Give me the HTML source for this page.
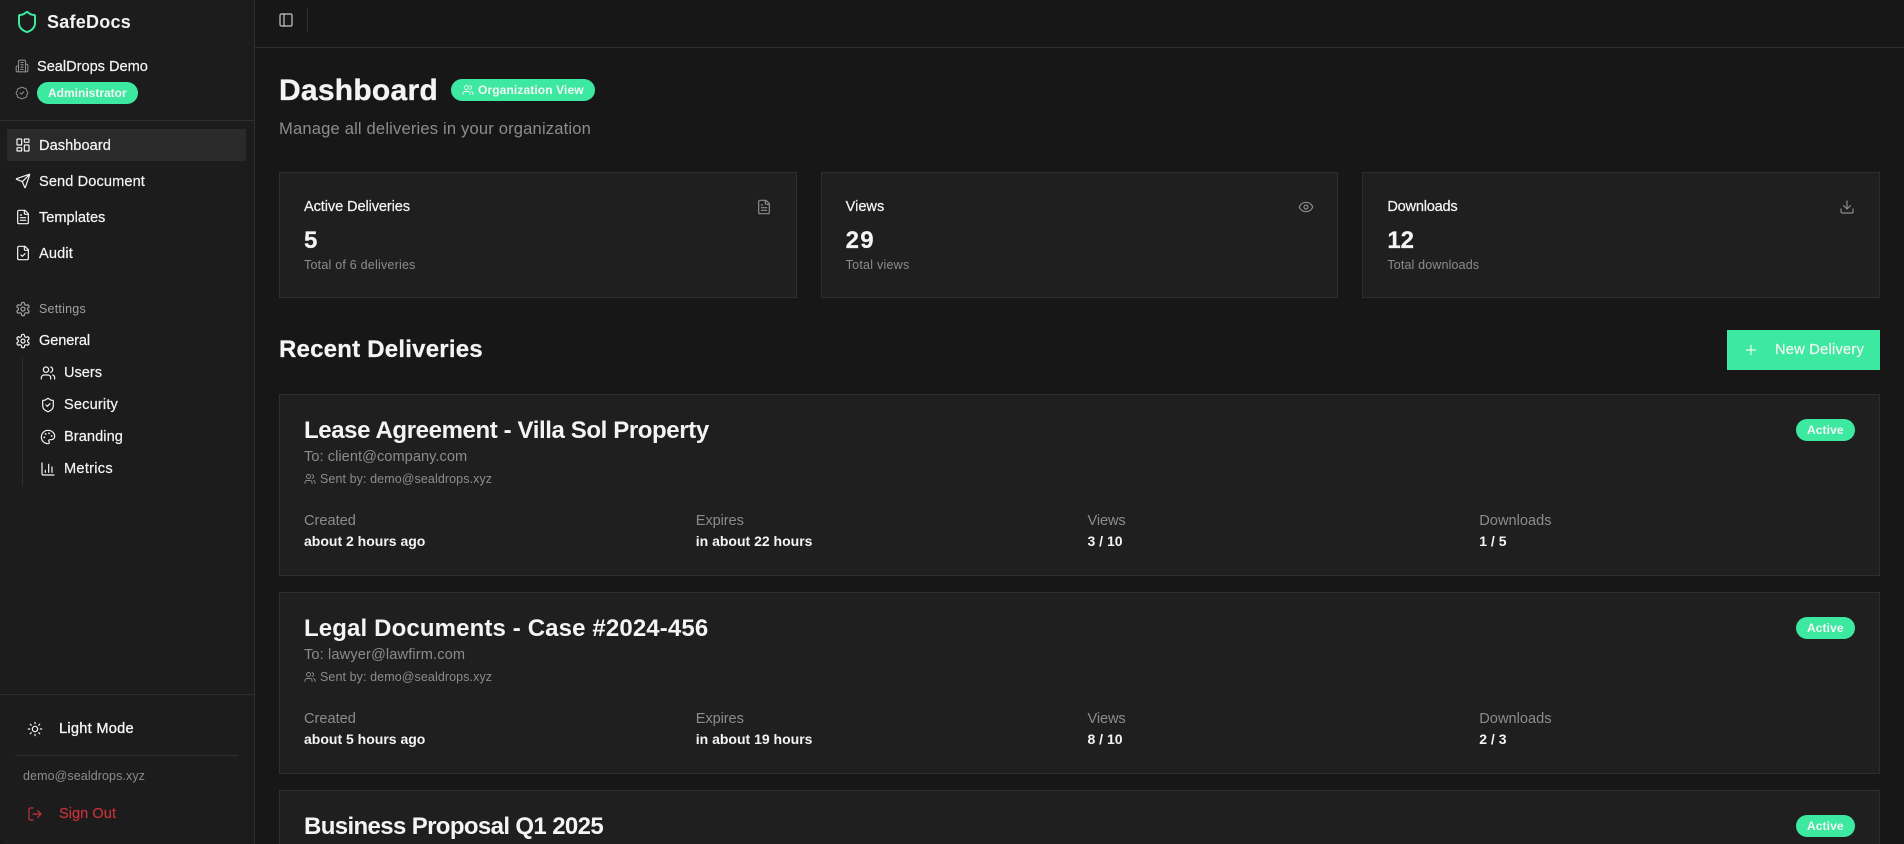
<!DOCTYPE html>
<html lang="en">
<head>
<meta charset="utf-8">
<title>SafeDocs Dashboard</title>
<style>
*{box-sizing:border-box;margin:0;padding:0}
html,body{width:1904px;height:844px;overflow:hidden;background:#171717;font-family:"Liberation Sans",sans-serif;color:#f4f4f4}
.t{position:absolute;white-space:nowrap;line-height:20px;font-size:14.6px}
.m{-webkit-text-stroke:.2px currentColor}
.b{font-weight:700;font-size:14px}
.x{font-size:12.5px}
.b.x{font-size:12px}
.mut{color:#8c8c8c}
svg.i{position:absolute;fill:none;stroke:currentColor;stroke-width:1.8;stroke-linecap:round;stroke-linejoin:round}
aside{position:absolute;left:0;top:0;width:255px;height:844px;background:#1c1c1c;border-right:1px solid #2e2e2e;border-bottom-left-radius:6px;overflow:hidden}
.ln{position:absolute;background:#2e2e2e}
main{position:absolute;left:255px;top:0;width:1649px;height:844px;overflow:hidden}
.abs{position:absolute;left:-255px;top:0;width:1904px;height:844px}
.card{position:absolute;background:#1f1f1f;box-shadow:inset 0 0 0 1px #2e2e2e}
.stat{top:172px;width:517.67px;height:126px}
.del{left:279px;width:1601px;height:182px}
.pill{position:absolute;background:#3de9a1;border-radius:11px;height:22px}
.title{position:absolute;left:25px;top:21px;font-size:24px;line-height:32px;font-weight:700;white-space:nowrap}
.num{position:absolute;left:25px;top:53px;font-size:24px;line-height:32px;font-weight:700;-webkit-text-stroke:.2px currentColor}
</style>
</head>
<body>
<svg width="0" height="0" style="position:absolute">
<defs>
<symbol id="shield" viewBox="0 0 24 24"><path d="M20 13c0 5-3.5 7.5-7.66 8.95a1 1 0 0 1-.67-.01C7.5 20.5 4 18 4 13V6a1 1 0 0 1 1-1c2 0 4.5-1.2 6.24-2.72a1.17 1.17 0 0 1 1.52 0C14.51 3.81 17 5 19 5a1 1 0 0 1 1 1z"/></symbol>
<symbol id="shieldc" viewBox="0 0 24 24"><path d="M20 13c0 5-3.5 7.5-7.66 8.95a1 1 0 0 1-.67-.01C7.5 20.5 4 18 4 13V6a1 1 0 0 1 1-1c2 0 4.5-1.2 6.24-2.72a1.17 1.17 0 0 1 1.52 0C14.51 3.81 17 5 19 5a1 1 0 0 1 1 1z"/><path d="m9 12 2 2 4-4"/></symbol>
<symbol id="bld" viewBox="0 0 24 24"><path d="M6 22V4a2 2 0 0 1 2-2h8a2 2 0 0 1 2 2v18Z"/><path d="M6 12H4a2 2 0 0 0-2 2v6a2 2 0 0 0 2 2h2"/><path d="M18 9h2a2 2 0 0 1 2 2v9a2 2 0 0 1-2 2h-2"/><path d="M10 6h4M10 10h4M10 14h4M10 18h4"/></symbol>
<symbol id="badge" viewBox="0 0 24 24"><path d="M3.85 8.62a4 4 0 0 1 4.78-4.77 4 4 0 0 1 6.74 0 4 4 0 0 1 4.78 4.78 4 4 0 0 1 0 6.74 4 4 0 0 1-4.77 4.78 4 4 0 0 1-6.75 0 4 4 0 0 1-4.78-4.77 4 4 0 0 1 0-6.76Z"/><path d="m9 12 2 2 4-4"/></symbol>
<symbol id="dash" viewBox="0 0 24 24"><rect x="3" y="3" width="7" height="9" rx="1"/><rect x="14" y="3" width="7" height="5" rx="1"/><rect x="14" y="12" width="7" height="9" rx="1"/><rect x="3" y="16" width="7" height="5" rx="1"/></symbol>
<symbol id="send" viewBox="0 0 24 24"><path d="M14.536 21.686a.5.5 0 0 0 .937-.024l6.5-19a.496.496 0 0 0-.635-.635l-19 6.5a.5.5 0 0 0-.024.937l7.93 3.18a2 2 0 0 1 1.112 1.11z"/><path d="m21.854 2.147-10.94 10.939"/></symbol>
<symbol id="file" viewBox="0 0 24 24"><path d="M15 2H6a2 2 0 0 0-2 2v16a2 2 0 0 0 2 2h12a2 2 0 0 0 2-2V7Z"/><path d="M14 2v4a2 2 0 0 0 2 2h4"/><path d="M10 9H8M16 13H8M16 17H8"/></symbol>
<symbol id="filec" viewBox="0 0 24 24"><path d="M15 2H6a2 2 0 0 0-2 2v16a2 2 0 0 0 2 2h12a2 2 0 0 0 2-2V7Z"/><path d="M14 2v4a2 2 0 0 0 2 2h4"/><path d="m9 15 2 2 4-4"/></symbol>
<symbol id="gear" viewBox="0 0 24 24"><path d="M12.22 2h-.44a2 2 0 0 0-2 2v.18a2 2 0 0 1-1 1.73l-.43.25a2 2 0 0 1-2 0l-.15-.08a2 2 0 0 0-2.73.73l-.22.38a2 2 0 0 0 .73 2.73l.15.1a2 2 0 0 1 1 1.72v.51a2 2 0 0 1-1 1.74l-.15.09a2 2 0 0 0-.73 2.73l.22.38a2 2 0 0 0 2.73.73l.15-.08a2 2 0 0 1 2 0l.43.25a2 2 0 0 1 1 1.73V20a2 2 0 0 0 2 2h.44a2 2 0 0 0 2-2v-.18a2 2 0 0 1 1-1.73l.43-.25a2 2 0 0 1 2 0l.15.08a2 2 0 0 0 2.73-.73l.22-.39a2 2 0 0 0-.73-2.73l-.15-.08a2 2 0 0 1-1-1.74v-.5a2 2 0 0 1 1-1.74l.15-.09a2 2 0 0 0 .73-2.73l-.22-.38a2 2 0 0 0-2.73-.73l-.15.08a2 2 0 0 1-2 0l-.43-.25a2 2 0 0 1-1-1.73V4a2 2 0 0 0-2-2z"/><circle cx="12" cy="12" r="3"/></symbol>
<symbol id="users" viewBox="0 0 24 24"><path d="M16 21v-2a4 4 0 0 0-4-4H6a4 4 0 0 0-4 4v2"/><circle cx="9" cy="7" r="4"/><path d="M22 21v-2a4 4 0 0 0-3-3.87"/><path d="M16 3.13a4 4 0 0 1 0 7.75"/></symbol>
<symbol id="pal" viewBox="0 0 24 24"><path d="M12 22a1 1 0 0 1 0-20 10 9 0 0 1 10 9 5 5 0 0 1-5 5h-2.25a1.75 1.75 0 0 0-1.4 2.8l.3.4a1.75 1.75 0 0 1-1.4 2.8z"/><circle cx="13.5" cy="6.5" r=".5" fill="currentColor"/><circle cx="17.5" cy="10.5" r=".5" fill="currentColor"/><circle cx="6.5" cy="12.5" r=".5" fill="currentColor"/><circle cx="8.5" cy="7.5" r=".5" fill="currentColor"/></symbol>
<symbol id="chart" viewBox="0 0 24 24"><path d="M3 3v16a2 2 0 0 0 2 2h16"/><path d="M18 17V9"/><path d="M13 17V5"/><path d="M8 17v-3"/></symbol>
<symbol id="sun" viewBox="0 0 24 24"><circle cx="12" cy="12" r="4"/><path d="M12 2v2M12 20v2M4.93 4.93l1.41 1.41M17.66 17.66l1.41 1.41M2 12h2M20 12h2M6.34 17.66l-1.41 1.41M19.07 4.93l-1.41 1.41"/></symbol>
<symbol id="out" viewBox="0 0 24 24"><path d="M9 21H5a2 2 0 0 1-2-2V5a2 2 0 0 1 2-2h4"/><path d="m16 17 5-5-5-5"/><path d="M21 12H9"/></symbol>
<symbol id="panel" viewBox="0 0 24 24"><rect x="3" y="3" width="18" height="18" rx="2"/><path d="M9 3v18"/></symbol>
<symbol id="eye" viewBox="0 0 24 24"><path d="M2.062 12.348a1 1 0 0 1 0-.696 10.75 10.75 0 0 1 19.876 0 1 1 0 0 1 0 .696 10.75 10.75 0 0 1-19.876 0"/><circle cx="12" cy="12" r="3"/></symbol>
<symbol id="dl" viewBox="0 0 24 24"><path d="M21 15v4a2 2 0 0 1-2 2H5a2 2 0 0 1-2-2v-4"/><path d="m7 10 5 5 5-5"/><path d="M12 15V3"/></symbol>
<symbol id="plus" viewBox="0 0 24 24"><path d="M5 12h14"/><path d="M12 5v14"/></symbol>
</defs>
</svg>

<aside>
  <svg class="i" style="left:15px;top:10px;color:#3de9a1;stroke-width:2" width="24" height="24"><use href="#shield"/></svg>
  <div class="t b" style="left:47px;top:12px;font-size:18px;letter-spacing:.25px">SafeDocs</div>

  <svg class="i" style="left:15px;top:59px;color:#8c8c8c" width="14" height="14"><use href="#bld"/></svg>
  <div class="t m" style="left:37px;top:57px;letter-spacing:-.02px">SealDrops Demo</div>
  <svg class="i" style="left:15px;top:86px;color:#8c8c8c" width="14" height="14"><use href="#badge"/></svg>
  <div class="pill" style="left:37px;top:82px;width:101px"></div>
  <div class="t b x" style="left:48px;top:83px">Administrator</div>

  <div class="ln" style="left:0;top:120px;width:254px;height:1px"></div>
  <div style="position:absolute;left:7px;top:129px;width:239px;height:32px;background:#2a2a2a"></div>

  <svg class="i" style="left:15px;top:137px" width="16" height="16"><use href="#dash"/></svg>
  <div class="t m" style="left:39px;top:136px;letter-spacing:.06px">Dashboard</div>
  <svg class="i" style="left:15px;top:173px" width="16" height="16"><use href="#send"/></svg>
  <div class="t m" style="left:39px;top:172px;letter-spacing:.1px">Send Document</div>
  <svg class="i" style="left:15px;top:209px" width="16" height="16"><use href="#file"/></svg>
  <div class="t m" style="left:39px;top:208px;letter-spacing:-.02px">Templates</div>
  <svg class="i" style="left:15px;top:245px" width="16" height="16"><use href="#filec"/></svg>
  <div class="t m" style="left:39px;top:244px;letter-spacing:.13px">Audit</div>

  <svg class="i" style="left:15px;top:301px;color:#a0a0a0" width="16" height="16"><use href="#gear"/></svg>
  <div class="t x" style="left:39px;top:299px;letter-spacing:.22px;color:#a0a0a0">Settings</div>
  <svg class="i" style="left:15px;top:333px" width="16" height="16"><use href="#gear"/></svg>
  <div class="t m" style="left:39px;top:331px;letter-spacing:-.13px">General</div>

  <div class="ln" style="left:22px;top:357px;width:1px;height:129px"></div>
  <svg class="i" style="left:40px;top:365px" width="16" height="16"><use href="#users"/></svg>
  <div class="t m" style="left:64px;top:363px;letter-spacing:-.03px">Users</div>
  <svg class="i" style="left:40px;top:397px" width="16" height="16"><use href="#shieldc"/></svg>
  <div class="t m" style="left:64px;top:395px;letter-spacing:.16px">Security</div>
  <svg class="i" style="left:40px;top:429px" width="16" height="16"><use href="#pal"/></svg>
  <div class="t m" style="left:64px;top:427px;letter-spacing:.07px">Branding</div>
  <svg class="i" style="left:40px;top:461px" width="16" height="16"><use href="#chart"/></svg>
  <div class="t m" style="left:64px;top:459px;letter-spacing:.27px">Metrics</div>

  <div class="ln" style="left:0;top:694px;width:254px;height:1px"></div>
  <svg class="i" style="left:27px;top:721px" width="16" height="16"><use href="#sun"/></svg>
  <div class="t m" style="left:59px;top:719px;letter-spacing:.27px;-webkit-text-stroke-width:.35px">Light Mode</div>
  <div class="ln" style="left:15px;top:755px;width:223px;height:1px"></div>
  <div class="t x mut" style="left:23px;top:766px;letter-spacing:.09px">demo@sealdrops.xyz</div>
  <svg class="i" style="left:27px;top:806px;color:#c4323a" width="16" height="16"><use href="#out"/></svg>
  <div class="t m" style="left:59px;top:804px;letter-spacing:.03px;color:#c4323a">Sign Out</div>
</aside>

<main>
<div class="abs">
  <div class="ln" style="left:255px;top:47px;width:1649px;height:1px"></div>
  <svg class="i" style="left:277.5px;top:12px;color:#c8c8c8" width="16" height="16"><use href="#panel"/></svg>
  <div class="ln" style="left:307px;top:8px;width:1px;height:24px"></div>

  <div class="t b" style="left:279px;top:73px;font-size:30px;line-height:36px;letter-spacing:.25px;-webkit-text-stroke:.35px currentColor">Dashboard</div>
  <div class="pill" style="left:451px;top:79px;width:144px"></div>
  <svg class="i" style="left:462px;top:84px" width="12" height="12"><use href="#users"/></svg>
  <div class="t b x" style="left:478px;top:80px;letter-spacing:.11px">Organization View</div>
  <div class="t mut" style="left:279px;top:117px;font-size:16.6px;line-height:24px;letter-spacing:.16px">Manage all deliveries in your organization</div>

  <div class="card stat" style="left:279px">
    <div class="t m" style="left:25px;top:25px;letter-spacing:-.11px">Active Deliveries</div>
    <svg class="i mut" style="left:477px;top:27px" width="16" height="16"><use href="#file"/></svg>
    <div class="num">5</div>
    <div class="t x mut" style="left:25px;top:83px;letter-spacing:.22px">Total of 6 deliveries</div>
  </div>
  <div class="card stat" style="left:820.67px">
    <div class="t m" style="left:25px;top:25px;letter-spacing:-.02px">Views</div>
    <svg class="i mut" style="left:477px;top:27px" width="16" height="16"><use href="#eye"/></svg>
    <div class="num" style="letter-spacing:1.2px">29</div>
    <div class="t x mut" style="left:25px;top:83px;letter-spacing:.24px">Total views</div>
  </div>
  <div class="card stat" style="left:1362.33px">
    <div class="t m" style="left:25px;top:25px;letter-spacing:-.23px">Downloads</div>
    <svg class="i mut" style="left:477px;top:27px" width="16" height="16"><use href="#dl"/></svg>
    <div class="num">12</div>
    <div class="t x mut" style="left:25px;top:83px;letter-spacing:.15px">Total downloads</div>
  </div>

  <div class="t b" style="left:279px;top:334px;font-size:24px;line-height:32px;letter-spacing:.22px;-webkit-text-stroke:.25px currentColor">Recent Deliveries</div>
  <div style="position:absolute;left:1727px;top:330px;width:153px;height:40px;background:#3de9a1"></div>
  <svg class="i" style="left:1743px;top:342px" width="16" height="16"><use href="#plus"/></svg>
  <div class="t m" style="left:1775px;top:340px;letter-spacing:.26px">New Delivery</div>

  <div class="card del" style="top:394px">
    <div class="title" style="letter-spacing:-.39px">Lease Agreement - Villa Sol Property</div>
    <div class="pill" style="left:1517px;top:25px;width:59px"></div>
    <div class="t b x" style="left:1528px;top:26px;letter-spacing:.1px">Active</div>
    <div class="t mut" style="left:25px;top:53px;letter-spacing:.05px">To: client@company.com</div>
    <svg class="i mut" style="left:25px;top:79px" width="12" height="12"><use href="#users"/></svg>
    <div class="t x mut" style="left:41px;top:75px;letter-spacing:.09px">Sent by: demo@sealdrops.xyz</div>
    <div class="t mut" style="left:25px;top:117px">Created</div>
    <div class="t b" style="left:25px;top:137px">about 2 hours ago</div>
    <div class="t mut" style="left:416.75px;top:117px;letter-spacing:-.09px">Expires</div>
    <div class="t b" style="left:416.75px;top:137px">in about 22 hours</div>
    <div class="t mut" style="left:808.5px;top:117px;letter-spacing:-.12px">Views</div>
    <div class="t b" style="left:808.5px;top:137px">3 / 10</div>
    <div class="t mut" style="left:1200.25px;top:117px;letter-spacing:.02px">Downloads</div>
    <div class="t b" style="left:1200.25px;top:137px">1 / 5</div>
  </div>

  <div class="card del" style="top:592px">
    <div class="title" style="letter-spacing:.13px">Legal Documents - Case #2024-456</div>
    <div class="pill" style="left:1517px;top:25px;width:59px"></div>
    <div class="t b x" style="left:1528px;top:26px;letter-spacing:.1px">Active</div>
    <div class="t mut" style="left:25px;top:53px;letter-spacing:.13px">To: lawyer@lawfirm.com</div>
    <svg class="i mut" style="left:25px;top:79px" width="12" height="12"><use href="#users"/></svg>
    <div class="t x mut" style="left:41px;top:75px;letter-spacing:.09px">Sent by: demo@sealdrops.xyz</div>
    <div class="t mut" style="left:25px;top:117px">Created</div>
    <div class="t b" style="left:25px;top:137px">about 5 hours ago</div>
    <div class="t mut" style="left:416.75px;top:117px;letter-spacing:-.09px">Expires</div>
    <div class="t b" style="left:416.75px;top:137px">in about 19 hours</div>
    <div class="t mut" style="left:808.5px;top:117px;letter-spacing:-.12px">Views</div>
    <div class="t b" style="left:808.5px;top:137px">8 / 10</div>
    <div class="t mut" style="left:1200.25px;top:117px;letter-spacing:.02px">Downloads</div>
    <div class="t b" style="left:1200.25px;top:137px">2 / 3</div>
  </div>

  <div class="card del" style="top:790px">
    <div class="title" style="letter-spacing:-.63px">Business Proposal Q1 2025</div>
    <div class="pill" style="left:1517px;top:25px;width:59px"></div>
    <div class="t b x" style="left:1528px;top:26px;letter-spacing:.1px">Active</div>
  </div>
</div>
</main>
</body>
</html>
